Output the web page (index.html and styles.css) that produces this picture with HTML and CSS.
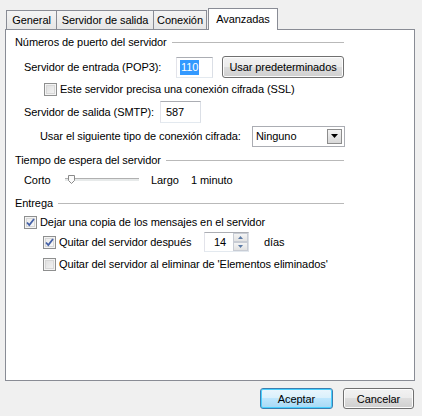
FILE: index.html
```
<!DOCTYPE html>
<html lang="es">
<head>
<meta charset="utf-8">
<link rel="stylesheet" href="styles.css">
</head>
<body>
<div class="dialog">
  <div class="tabs">
    <div class="tab t1">General</div>
    <div class="tab t2">Servidor de salida</div>
    <div class="tab t3">Conexión</div>
    <div class="tab active">Avanzadas</div>
  </div>
  <div class="panel">
    <div class="hdr h1"><span>Números de puerto del servidor</span><i></i></div>
    <div class="row r-pop">
      <span class="lbl w-pop">Servidor de entrada (POP3):</span>
      <div class="input in-pop"><span class="sel">110</span></div>
      <button class="btn btn-def">Usar predeterminados</button>
    </div>
    <div class="row r-ssl">
      <span class="cb"></span><span>Este servidor precisa una conexión cifrada (SSL)</span>
    </div>
    <div class="row r-smtp">
      <span class="lbl w-smtp">Servidor de salida (SMTP):</span>
      <div class="input in-smtp">587</div>
    </div>
    <div class="row r-cif">
      <span class="lbl w-cif">Usar el siguiente tipo de conexión cifrada:</span>
      <div class="select"><span>Ninguno</span><span class="dd"><svg width="7" height="4" viewBox="0 0 7 4"><path d="M0 0h7L3.5 4z" fill="#000"/></svg></span></div>
    </div>
    <div class="hdr h2"><span>Tiempo de espera del servidor</span><i></i></div>
    <div class="row r-time">
      <span class="lbl w-corto">Corto</span>
      <div class="slider"><span class="track"></span>
        <svg class="thumb" width="7" height="9" viewBox="0 0 7 9"><path d="M0.5 0.5h6v5l-3 3-3-3z" fill="#fbfbfb" stroke="#8a8a8a"/></svg>
      </div>
      <span class="lbl w-largo">Largo</span><span>1 minuto</span>
    </div>
    <div class="hdr h3"><span>Entrega</span><i></i></div>
    <div class="row r-dejar">
      <span class="cb on"><svg width="9" height="9" viewBox="0 0 9 9"><path d="M1 4.5l2.3 2.6L8 1" fill="none" stroke="#4561a7" stroke-width="1.8"/></svg></span><span>Dejar una copia de los mensajes en el servidor</span>
    </div>
    <div class="row r-quitar">
      <span class="cb on"><svg width="9" height="9" viewBox="0 0 9 9"><path d="M1 4.5l2.3 2.6L8 1" fill="none" stroke="#4561a7" stroke-width="1.8"/></svg></span><span class="w-quitar">Quitar del servidor después</span>
      <div class="spin"><span class="spin-val">14</span>
        <span class="spin-btns">
          <span class="sb"><svg width="5" height="3" viewBox="0 0 5 3"><path d="M0 3L2.5 0 5 3z" fill="#5b7aa6"/></svg></span>
          <span class="sb"><svg width="5" height="3" viewBox="0 0 5 3"><path d="M0 0h5L2.5 3z" fill="#5b7aa6"/></svg></span>
        </span>
      </div>
      <span class="dias">días</span>
    </div>
    <div class="row r-elim">
      <span class="cb"></span><span>Quitar del servidor al eliminar de 'Elementos eliminados'</span>
    </div>
  </div>
  <div class="footer">
    <button class="btn btn-ok">Aceptar</button>
    <button class="btn btn-cancel">Cancelar</button>
  </div>
</div>
</body>
</html>
```
FILE: styles.css
```
html, body { margin: 0; padding: 0; }
body {
  width: 422px; height: 416px; overflow: hidden;
  background: #f0f0f0;
  font-family: "Liberation Sans", Arial, sans-serif;
  font-size: 11px; letter-spacing: -0.08px; color: #000;
  white-space: nowrap;
}
.dialog { padding: 8px 0 0 5px; }
.tabs { display: flex; height: 21px; align-items: flex-end; position: relative; z-index: 1; }
.tab {
  height: 19px; box-sizing: border-box;
  border: 1px solid #898c95; border-bottom: none;
  background: linear-gradient(#f4f4f4, #e6e6e6);
  display: flex; align-items: center; justify-content: center;
  margin-right: -1px;
}
.t1 { width: 51px; margin-left: 1px; }
.t2 { width: 98px; }
.t3 { width: 54px; }
.active {
  width: 70px; height: 22px; margin-bottom: -1px; margin-left: 2px;
  background: #fff; padding-bottom: 2px;
}
.panel {
  width: 410px; height: 352px; box-sizing: border-box;
  border: 1px solid #898c95; background: #fff;
  padding: 4px 0 0 9px;
}
.hdr { display: flex; align-items: center; height: 16px; width: 329px; }
.hdr i { flex: 1; height: 1px; background: #b9b9b9; margin-left: 5px; }
.row { display: flex; align-items: center; padding-left: 9px; }
.h1 { margin-top: 0; }
.r-pop { height: 22px; margin-top: 6px; }
.lbl { display: inline-block; }
.w-pop { width: 152px; }
.input {
  box-sizing: border-box; height: 21px;
  border: 1px solid #abadb3; border-color: #abadb3 #dbdfe6 #e3e9ef #e2e3ea;
  display: flex; align-items: center; padding-left: 3px;
}
.in-pop { width: 37px; }
.sel { background: #3399ff; color: #fff; padding: 0 1px; line-height: 15px; }
.btn {
  font: inherit; color: #000; letter-spacing: inherit;
  border: 1px solid #707070; border-radius: 3px;
  background: linear-gradient(#f2f2f2 0%, #ebebeb 49%, #dddddd 50%, #cfcfcf 100%);
  box-shadow: inset 0 0 0 1px #fcfcfc;
  padding: 0; box-sizing: border-box;
}
.btn-def { width: 122px; height: 22px; margin-left: 9px; }
.r-ssl { height: 16px; margin-top: 3px; padding-left: 29px; }
.cb {
  width: 13px; height: 13px; box-sizing: border-box; flex: none;
  border: 1px solid #8e8f8f;
  background: linear-gradient(135deg, #dcdcdc, #f6f6f6);
  box-shadow: inset 0 0 0 1px #f4f4f4, inset 0 0 0 2px #d7d7d7;
  margin-right: 3px; display: flex; align-items: center; justify-content: center;
}
.cb.on { background: linear-gradient(135deg, #e9e9e9, #fafafa); }
.r-smtp { height: 22px; margin-top: 4px; }
.w-smtp { width: 136px; }
.in-smtp { width: 41px; height: 22px; padding-left: 5px; }
.r-cif { height: 24px; margin-top: 1px; padding-left: 25px; }
.w-cif { width: 212px; }
.select {
  width: 93px; height: 21px; box-sizing: border-box;
  border: 1px solid #abadb3; display: flex; align-items: center; justify-content: space-between;
  padding: 0 2px 0 3px;
}
.dd {
  width: 15px; height: 15px; box-sizing: border-box;
  border: 1px solid #8d8d8d; background: linear-gradient(#f3f3f3, #d8d8d8);
  display: flex; align-items: center; justify-content: center;
}
.h2 { margin-top: 4px; }
.r-time { height: 16px; margin-top: 4px; }
.w-corto { width: 41px; }
.slider { position: relative; width: 74px; height: 10px; margin-right: 12px; }
.track { position: absolute; left: 0; right: 0; top: 3px; height: 2px; background: #e7eaea; border-top: 1px solid #b0b0b0; }
.thumb { position: absolute; left: 3px; top: 0; }
.w-largo { width: 40px; }
.h3 { margin-top: 7px; }
.r-dejar { height: 16px; margin-top: 3px; padding-left: 9px; }
.r-quitar { height: 20px; margin-top: 2px; padding-left: 28px; }
.w-quitar { width: 145px; }
.spin {
  width: 45px; height: 20px; box-sizing: border-box;
  border: 1px solid #abadb3; border-color: #abadb3 #dbdfe6 #e3e9ef #e2e3ea;
  display: flex; align-items: center; justify-content: space-between; padding-left: 9px;
}
.spin-btns { display: flex; flex-direction: column; width: 15px; height: 18px; }
.sb {
  flex: 1; display: flex; align-items: center; justify-content: center;
  border: 1px solid #c8ccd4; background: linear-gradient(#f4f4f4, #e2e2e2);
}
.dias { margin-left: 15px; }
.r-elim { height: 16px; margin-top: 4px; padding-left: 28px; }
.footer { display: flex; justify-content: flex-end; gap: 10px; padding: 7px 8px 0 0; }
.btn-ok {
  width: 73px; height: 21px;
  border-color: #3c7fb1;
  box-shadow: inset 0 0 0 1px #48d0ff;
  background: linear-gradient(#eaf6fd 0%, #d9f0fc 49%, #bee6fd 50%, #a7d9f5 100%);
}
.btn-cancel { width: 71px; height: 21px; }
```
